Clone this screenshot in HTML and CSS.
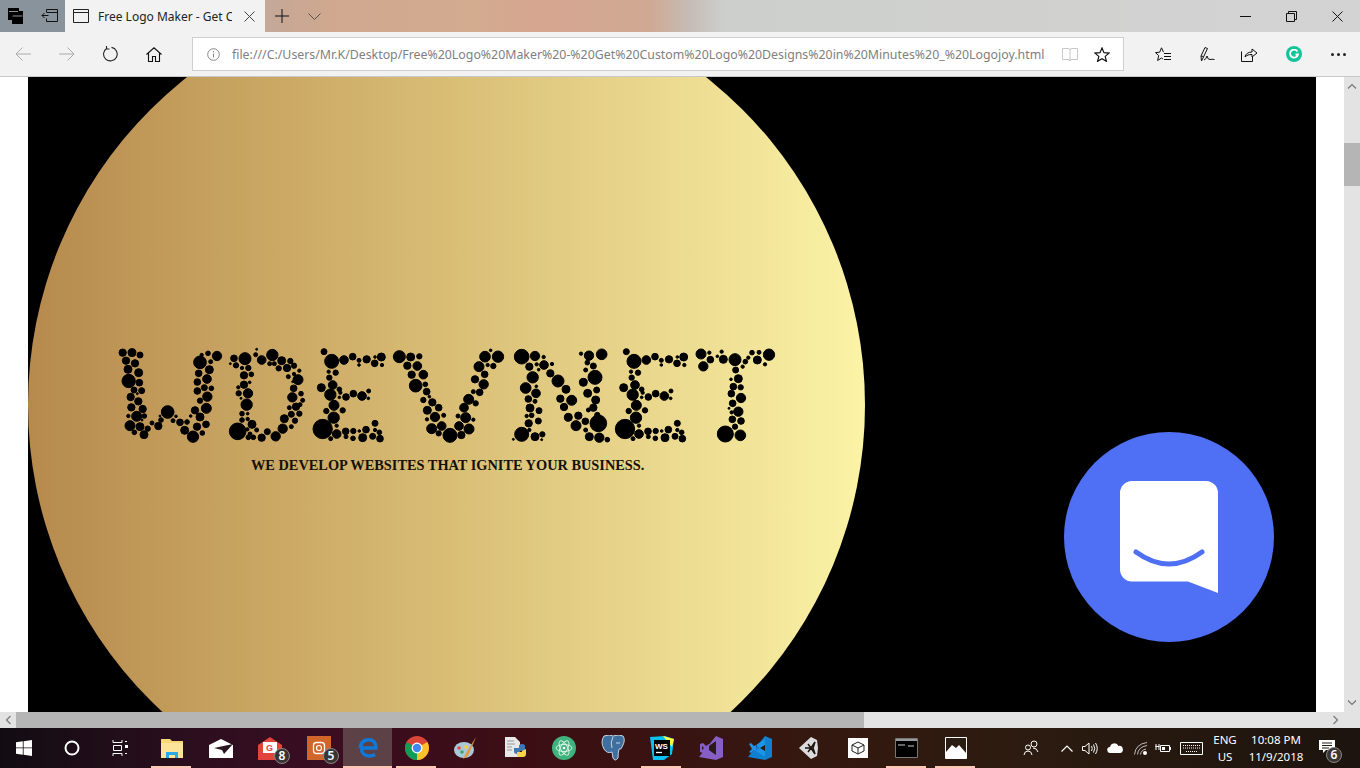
FILE: index.html
```html
<!DOCTYPE html>
<html>
<head>
    <meta charset="utf-8">
    <title>Free Logo Maker</title>
    <link rel="stylesheet" href="styles.css">
</head>
<body>
    <!-- Tab strip -->
    <div class="tabstrip">
        <div class="tab-tools">
            <svg width="16" height="16" viewBox="0 0 16 16"><path d="M0 0h11v3h4v13H4v-4H0z" fill="#000"/><path d="M1 3.500h9M4.500 8h10" stroke="#8a949c" fill="none"/></svg>
            <svg width="17" height="14" viewBox="0 0 17 14" fill="none" stroke="#111"><path d="M5.500 3.500V.5h11v12h-11v-3M6 3.500h10M7.500 6.500H1M3.500 4 1 6.500 3.500 9"/></svg>
        </div>
        <div class="tab">
            <svg width="16" height="14" viewBox="0 0 16 14" fill="none" stroke="#222"><path d="M.5.500h15v13H.5zM.5 3.500h15"/></svg>
            <span class="tab-title">Free Logo Maker - Get Custom Logo Designs</span>
            <svg width="11" height="11" viewBox="0 0 11 11" stroke="#444"><path d="M.5.500l10 10M10.500.500l-10 10"/></svg>
        </div>
        <div class="tab-new">
            <svg width="14" height="14" viewBox="0 0 14 14" stroke="#111"><path d="M7 0v14M0 7h14"/></svg>
            <svg class="tab-more" width="13" height="7" viewBox="0 0 13 7" fill="none" stroke="#555"><path d="M.5.500l6 6 6-6"/></svg>
        </div>
        <div class="win-btns">
            <div class="win-btn"><svg width="11" height="11" viewBox="0 0 11 11" stroke="#111"><path d="M0 5.500h11"/></svg></div>
            <div class="win-btn"><svg width="11" height="11" viewBox="0 0 11 11" fill="none" stroke="#111"><path d="M.5 2.500h8v8h-8zM2.500 2.500v-2h8v8h-2"/></svg></div>
            <div class="win-btn"><svg width="11" height="11" viewBox="0 0 11 11" stroke="#111"><path d="M.5.500l10 10M10.500.500l-10 10"/></svg></div>
        </div>
    </div>

    <!-- Address bar -->
    <div class="toolbar">
        <div class="nav-btns">
            <svg width="16" height="14" viewBox="0 0 16 14" fill="none" stroke="#aaa"><path d="M16 7H1M7.500.500 1 7l6.500 6.500"/></svg>
            <svg width="16" height="14" viewBox="0 0 16 14" fill="none" stroke="#aaa"><path d="M0 7h15M8.500.500 15 7l-6.500 6.500"/></svg>
            <svg class="nav-reload" width="16" height="16" viewBox="0 0 16 16" fill="none" stroke="#222" stroke-width="1.100"><path d="M5 2.200A6.800 6.800 0 1 0 9.500 1.400M4.500 0v3h3"/></svg>
            <svg width="16" height="15" viewBox="0 0 16 15" fill="none" stroke="#111" stroke-width="1.100"><path d="M.5 7.500 8 .8l7.500 6.700M2.500 6v8.500h4V9.500h3v5h4V6"/></svg>
        </div>
        <div class="address">
            <svg width="13" height="13" viewBox="0 0 13 13" fill="none" stroke="#888"><circle cx="6.500" cy="6.500" r="5.800"/><path d="M6.500 5.500v4M6.500 3v1.300"/></svg>
            <span class="url">file:///C:/Users/Mr.K/Desktop/Free%20Logo%20Maker%20-%20Get%20Custom%20Logo%20Designs%20in%20Minutes%20_%20Logojoy.html</span>
            <svg class="reader" width="16" height="15" viewBox="0 0 16 15" fill="none" stroke="#c8c8c8"><path d="M.5 1.500h5.500q2 0 2 1.500 0-1.500 2-1.500h5.500v11H10q-2 0-2 1.500 0-1.500-2-1.500H.5zM8 3v11"/></svg>
            <svg class="star" width="16" height="15" viewBox="0 0 16 15" fill="none" stroke="#111" stroke-width="1.200"><path d="M8 1l2 4.700 5 .4-3.800 3.300 1.200 4.900L8 11.700l-4.400 2.600 1.200-4.900L1 6.100l5-.4z"/></svg>
        </div>
        <div class="tool-btns">
            <svg width="16" height="15" viewBox="0 0 16 15" fill="none" stroke="#111"><path d="M8.500 5.200 6.500.8 4.700 5.200l-4.200.4 3.200 3-1.100 4.900L6.500 11 8 12M9 6.500h7M9 9.500h7M9 12.500h7"/></svg>
            <svg width="15" height="16" viewBox="0 0 15 16" fill="none" stroke="#111"><path d="M1.500 15 1 10 5 1.500l2.500 1-4 8.500zM1 10l2.500.5M4 14q2-.5 3-4 1 4 3 3.500t4.500 0"/></svg>
            <svg class="tool-share" width="16" height="15" viewBox="0 0 16 15" fill="none" stroke="#111"><path d="M.5 4.500v10h11V10M4 10c.5-3 3-5 7-5V2l5 4-5 4V7.500c-3 0-5 .5-7 2.500z"/></svg>
            <div class="g-badge"><svg width="10" height="10" viewBox="0 0 10 10" fill="none" stroke="#fff" stroke-width="1.800"><path d="M8.500 2.500A4 4 0 1 0 9 5.500H6.500"/></svg></div>
            <div class="dots"><i></i><i></i><i></i></div>
        </div>
    </div>

    <!-- Page -->
    <div class="viewport">
        <div class="page">
            <div class="hero">
                <div class="disc">
                    <svg class="logo" width="700" height="118" viewBox="0 0 2100 354" role="img" aria-label="WDEVINET logo">
                        <defs>
                            <g id="letter-e">
                                <circle cx="672" cy="50" r="9"/><circle cx="695" cy="79" r="21"/><circle cx="732" cy="75" r="13"/><circle cx="758" cy="65" r="10"/><circle cx="777" cy="76" r="6"/><circle cx="777" cy="90" r="4"/><circle cx="800" cy="73" r="11"/><circle cx="825" cy="66" r="4"/><circle cx="844" cy="66" r="12"/><circle cx="824" cy="85" r="10"/><circle cx="846" cy="90" r="5"/>
                                <circle cx="686" cy="110" r="5"/><circle cx="707" cy="113" r="8"/><circle cx="688" cy="128" r="8"/><circle cx="698" cy="150" r="13"/><circle cx="664" cy="158" r="12"/><circle cx="718" cy="163" r="7"/><circle cx="691" cy="179" r="17"/><circle cx="721" cy="173" r="5"/><circle cx="718" cy="187" r="4"/><circle cx="738" cy="186" r="10"/><circle cx="760" cy="176" r="10"/><circle cx="786" cy="183" r="13"/><circle cx="806" cy="168" r="6"/><circle cx="805" cy="190" r="4"/>
                                <circle cx="702" cy="211" r="15"/><circle cx="728" cy="226" r="8"/><circle cx="679" cy="228" r="8"/><circle cx="701" cy="248" r="17"/><circle cx="668" cy="282" r="29"/><circle cx="710" cy="272" r="5"/><circle cx="710" cy="297" r="13"/><circle cx="737" cy="289" r="10"/><circle cx="760" cy="288" r="8"/><circle cx="778" cy="288" r="4"/><circle cx="798" cy="284" r="10"/><circle cx="825" cy="265" r="9"/><circle cx="825" cy="285" r="5"/><circle cx="838" cy="292" r="7"/><circle cx="738" cy="305" r="6"/><circle cx="759" cy="310" r="7"/><circle cx="692" cy="311" r="6"/><circle cx="788" cy="308" r="12"/><circle cx="818" cy="304" r="9"/><circle cx="840" cy="311" r="10"/>
                            </g>
                        </defs>
                        <!-- W -->
                        <circle cx="68" cy="53" r="11"/><circle cx="96" cy="53" r="12"/><circle cx="120" cy="60" r="9"/><circle cx="78" cy="77" r="11"/><circle cx="105" cy="85" r="11"/><circle cx="84" cy="103" r="12"/><circle cx="116" cy="113" r="12"/><circle cx="86" cy="138" r="20"/><circle cx="118" cy="143" r="10"/><circle cx="102" cy="165" r="9"/><circle cx="125" cy="167" r="9"/><circle cx="92" cy="186" r="11"/><circle cx="112" cy="176" r="3"/><circle cx="115" cy="199" r="11"/><circle cx="94" cy="217" r="11"/><circle cx="128" cy="222" r="11"/><circle cx="85" cy="243" r="5"/><circle cx="110" cy="244" r="15"/><circle cx="133" cy="243" r="7"/><circle cx="126" cy="255" r="3"/><circle cx="90" cy="272" r="15"/><circle cx="120" cy="275" r="12"/><circle cx="143" cy="281" r="8"/><circle cx="103" cy="292" r="7"/><circle cx="132" cy="299" r="12"/>
                        <circle cx="156" cy="264" r="6"/><circle cx="175" cy="273" r="11"/><circle cx="183" cy="255" r="7"/><circle cx="180" cy="243" r="3"/><circle cx="203" cy="231" r="19"/><circle cx="228" cy="244" r="4"/><circle cx="219" cy="257" r="6"/><circle cx="240" cy="262" r="10"/><circle cx="261" cy="261" r="7"/><circle cx="254" cy="286" r="12"/><circle cx="272" cy="243" r="4"/><circle cx="279" cy="305" r="17"/><circle cx="291" cy="275" r="11"/><circle cx="307" cy="294" r="7"/><circle cx="318" cy="268" r="10"/><circle cx="300" cy="246" r="12"/><circle cx="285" cy="226" r="11"/><circle cx="319" cy="220" r="15"/><circle cx="300" cy="197" r="8"/><circle cx="322" cy="185" r="14"/><circle cx="292" cy="168" r="10"/><circle cx="313" cy="158" r="9"/><circle cx="334" cy="160" r="7"/><circle cx="292" cy="141" r="10"/><circle cx="321" cy="132" r="13"/><circle cx="296" cy="115" r="10"/><circle cx="300" cy="82" r="19"/><circle cx="328" cy="104" r="12"/><circle cx="351" cy="63" r="14"/><circle cx="324" cy="55" r="7"/><circle cx="305" cy="60" r="5"/><circle cx="332" cy="80" r="6"/>
                        <!-- D -->
                        <circle cx="402" cy="70" r="10"/><circle cx="435" cy="71" r="18"/><circle cx="467" cy="59" r="6"/><circle cx="470" cy="43" r="3"/><circle cx="485" cy="75" r="13"/><circle cx="517" cy="60" r="17"/><circle cx="545" cy="77" r="12"/><circle cx="571" cy="78" r="8"/><circle cx="391" cy="86" r="3"/><circle cx="408" cy="91" r="8"/><circle cx="426" cy="99" r="5"/><circle cx="445" cy="99" r="8"/><circle cx="509" cy="86" r="6"/><circle cx="523" cy="86" r="6"/><circle cx="536" cy="100" r="8"/><circle cx="561" cy="99" r="11"/><circle cx="582" cy="92" r="8"/><circle cx="598" cy="107" r="5"/><circle cx="432" cy="121" r="11"/><circle cx="454" cy="118" r="7"/><circle cx="565" cy="125" r="6"/><circle cx="582" cy="117" r="5"/><circle cx="594" cy="134" r="15"/><circle cx="578" cy="140" r="3"/><circle cx="432" cy="149" r="11"/><circle cx="415" cy="157" r="5"/><circle cx="449" cy="142" r="4"/><circle cx="581" cy="160" r="10"/><circle cx="603" cy="176" r="7"/><circle cx="416" cy="175" r="8"/><circle cx="444" cy="175" r="14"/><circle cx="423" cy="190" r="3"/><circle cx="577" cy="187" r="14"/><circle cx="608" cy="196" r="6"/><circle cx="600" cy="209" r="6"/><circle cx="440" cy="209" r="17"/><circle cx="588" cy="215" r="11"/><circle cx="568" cy="218" r="6"/><circle cx="426" cy="236" r="7"/><circle cx="443" cy="236" r="4"/><circle cx="598" cy="236" r="8"/><circle cx="574" cy="238" r="9"/><circle cx="426" cy="255" r="7"/><circle cx="443" cy="252" r="5"/><circle cx="553" cy="251" r="12"/><circle cx="585" cy="257" r="8"/><circle cx="456" cy="268" r="12"/><circle cx="574" cy="275" r="6"/><circle cx="413" cy="289" r="25"/><circle cx="442" cy="283" r="5"/><circle cx="470" cy="285" r="6"/><circle cx="450" cy="297" r="6"/><circle cx="502" cy="290" r="9"/><circle cx="548" cy="281" r="14"/><circle cx="445" cy="307" r="7"/><circle cx="460" cy="307" r="7"/><circle cx="485" cy="308" r="11"/><circle cx="527" cy="304" r="14"/>
                        <!-- E -->
                        <use href="#letter-e"/>
                        <!-- V -->
                        <circle cx="898" cy="65" r="18"/><circle cx="932" cy="66" r="12"/><circle cx="958" cy="64" r="8"/><circle cx="922" cy="92" r="11"/><circle cx="952" cy="93" r="13"/><circle cx="935" cy="119" r="11"/><circle cx="970" cy="119" r="13"/><circle cx="947" cy="152" r="19"/><circle cx="976" cy="148" r="7"/><circle cx="980" cy="170" r="10"/><circle cx="988" cy="185" r="4"/><circle cx="970" cy="195" r="8"/><circle cx="997" cy="202" r="11"/><circle cx="982" cy="226" r="12"/><circle cx="1016" cy="218" r="10"/><circle cx="1005" cy="246" r="14"/><circle cx="981" cy="253" r="5"/><circle cx="1031" cy="241" r="6"/><circle cx="1025" cy="273" r="13"/><circle cx="995" cy="281" r="15"/><circle cx="1016" cy="295" r="8"/>
                        <g transform="translate(1020 0)">
                            <circle cx="30" cy="301" r="21"/><circle cx="64" cy="300" r="11"/><circle cx="87" cy="282" r="15"/><circle cx="57" cy="273" r="13"/><circle cx="77" cy="248" r="15"/><circle cx="100" cy="254" r="5"/><circle cx="54" cy="243" r="6"/><circle cx="72" cy="218" r="13"/><circle cx="107" cy="205" r="8"/><circle cx="86" cy="193" r="15"/><circle cx="119" cy="172" r="10"/><circle cx="100" cy="170" r="6"/><circle cx="131" cy="148" r="14"/><circle cx="105" cy="133" r="11"/><circle cx="134" cy="118" r="10"/><circle cx="117" cy="95" r="15"/><circle cx="160" cy="93" r="8"/><circle cx="143" cy="90" r="5"/><circle cx="135" cy="65" r="16"/><circle cx="174" cy="65" r="17"/><circle cx="152" cy="46" r="4"/>
                            <!-- I and N -->
                            <circle cx="245" cy="65" r="22"/><circle cx="285" cy="63" r="14"/><circle cx="311" cy="66" r="5"/><circle cx="268" cy="95" r="11"/><circle cx="290" cy="88" r="5"/><circle cx="312" cy="90" r="13"/><circle cx="296" cy="104" r="4"/><circle cx="336" cy="87" r="5"/><circle cx="278" cy="127" r="17"/><circle cx="289" cy="154" r="4"/><circle cx="257" cy="159" r="16"/><circle cx="331" cy="115" r="11"/><circle cx="354" cy="138" r="18"/><circle cx="288" cy="175" r="13"/><circle cx="378" cy="163" r="12"/><circle cx="265" cy="192" r="10"/><circle cx="285" cy="199" r="6"/><circle cx="270" cy="219" r="12"/><circle cx="297" cy="227" r="9"/><circle cx="260" cy="243" r="5"/><circle cx="275" cy="241" r="7"/><circle cx="266" cy="265" r="11"/><circle cx="295" cy="258" r="9"/><circle cx="268" cy="285" r="5"/><circle cx="245" cy="298" r="21"/><circle cx="220" cy="313" r="3"/><circle cx="285" cy="305" r="12"/><circle cx="307" cy="298" r="8"/><circle cx="305" cy="314" r="3"/>
                            <circle cx="361" cy="191" r="11"/><circle cx="395" cy="196" r="15"/><circle cx="372" cy="216" r="11"/><circle cx="385" cy="247" r="12"/><circle cx="415" cy="242" r="11"/><circle cx="408" cy="272" r="15"/><circle cx="436" cy="259" r="10"/><circle cx="437" cy="285" r="6"/><circle cx="475" cy="265" r="25"/><circle cx="448" cy="305" r="12"/><circle cx="478" cy="308" r="14"/><circle cx="502" cy="314" r="7"/>
                            <circle cx="423" cy="56" r="5"/><circle cx="447" cy="62" r="14"/><circle cx="485" cy="58" r="16"/><circle cx="442" cy="83" r="7"/><circle cx="460" cy="93" r="9"/><circle cx="437" cy="105" r="6"/><circle cx="465" cy="127" r="21"/><circle cx="430" cy="142" r="12"/><circle cx="470" cy="165" r="9"/><circle cx="443" cy="175" r="12"/><circle cx="467" cy="195" r="12"/><circle cx="460" cy="218" r="11"/><circle cx="472" cy="240" r="8"/><circle cx="445" cy="225" r="6"/>
                            <!-- T -->
                            <circle cx="783" cy="57" r="15"/><circle cx="808" cy="53" r="5"/><circle cx="845" cy="50" r="5"/><circle cx="811" cy="74" r="10"/><circle cx="790" cy="94" r="14"/><circle cx="832" cy="64" r="4"/><circle cx="850" cy="73" r="12"/><circle cx="885" cy="74" r="18"/><circle cx="916" cy="80" r="7"/><circle cx="908" cy="95" r="5"/><circle cx="936" cy="53" r="7"/><circle cx="957" cy="52" r="6"/><circle cx="925" cy="68" r="5"/><circle cx="952" cy="75" r="12"/><circle cx="987" cy="59" r="17"/><circle cx="975" cy="88" r="5"/><circle cx="887" cy="105" r="9"/><circle cx="873" cy="133" r="4"/><circle cx="895" cy="131" r="12"/><circle cx="880" cy="155" r="10"/><circle cx="902" cy="157" r="8"/><circle cx="874" cy="176" r="10"/><circle cx="903" cy="189" r="14"/><circle cx="878" cy="205" r="10"/><circle cx="867" cy="220" r="3"/><circle cx="895" cy="230" r="14"/><circle cx="875" cy="232" r="5"/><circle cx="877" cy="253" r="10"/><circle cx="903" cy="258" r="10"/><circle cx="885" cy="275" r="8"/><circle cx="856" cy="297" r="24"/><circle cx="901" cy="301" r="16"/>
                        </g>
                        <use href="#letter-e" transform="translate(907 0)"/>
                    </svg>
                    <div class="tagline">WE DEVELOP WEBSITES THAT IGNITE YOUR BUSINESS.</div>
                </div>
                <div class="chat-btn">
                    <svg width="98" height="112" viewBox="0 0 98 112"><path d="M12 0H86a12 12 0 0 1 12 12V112L68 100.500H12a12 12 0 0 1-12-12V12A12 12 0 0 1 12 0z" fill="#fff"/><path d="M16 71Q49 95 82 71" fill="none" stroke="#4f70f5" stroke-width="5" stroke-linecap="round"/></svg>
                </div>
            </div>
        </div>
        <div class="vscroll">
            <svg width="10" height="6" viewBox="0 0 10 6" fill="none" stroke="#777" stroke-width="1.200"><path d="M1 5.500l4-4 4 4"/></svg>
            <div class="vthumb"></div>
            <svg width="10" height="6" viewBox="0 0 10 6" fill="none" stroke="#777" stroke-width="1.200"><path d="M1 .5l4 4 4-4"/></svg>
        </div>
    </div>
    <div class="hscroll">
        <div class="harrow"><svg width="6" height="10" viewBox="0 0 6 10" fill="none" stroke="#777" stroke-width="1.200"><path d="M5.500 1l-4 4 4 4"/></svg></div>
        <div class="hthumb"></div>
        <div class="harrow harrow-right"><svg width="6" height="10" viewBox="0 0 6 10" fill="none" stroke="#777" stroke-width="1.200"><path d="M.5 1l4 4-4 4"/></svg></div>
    </div>

    <!-- Taskbar -->
    <div class="taskbar">
        <div class="sys-btn"><svg width="16" height="16" viewBox="0 0 16 16" fill="#fff"><path d="M0 2.300 6.800 1.300V7.500H0zM7.600 1.200 16 0V7.500H7.600zM0 8.300H6.800V14.700L0 13.700zM7.600 8.300H16V16L7.600 14.800z"/></svg></div>
        <div class="sys-btn"><svg width="16" height="16" viewBox="0 0 16 16" fill="none" stroke="#fff" stroke-width="2"><circle cx="8" cy="8" r="6.500"/></svg></div>
        <div class="sys-btn"><svg width="16" height="16" viewBox="0 0 16 16" fill="none" stroke="#fff"><path d="M1 0v2.500h9V0M1.500 5.500h8v5h-8zM1 16v-2.500h9V16M13 1.500h2M13 13.500h2"/><path d="M13 5h3v3h-3z" fill="#fff" stroke="none"/></svg></div>

        <div class="app on"><svg width="22" height="20" viewBox="0 0 22 20"><path d="M0 1h9l2 2h11v17H0z" fill="#f8d775"/><path d="M0 5h22v15H0z" fill="#fbe39a"/><path d="M5 20v-6h12v6h-3v-3H8v3z" fill="#2aa7e8"/></svg></div>
        <div class="app"><svg width="24" height="19" viewBox="0 0 24 19"><path d="M0 6 12 0l12 6v13H0z" fill="#fff"/><path d="M5 9l19-4-9 10-2-4z" fill="#2b1522"/></svg></div>
        <div class="app"><svg width="24" height="23" viewBox="0 0 24 23"><path d="M12 0 24 8v15H0V8z" fill="#e0443a"/><path d="M5 5h14v11H5z" fill="#fff"/><text x="8" y="14" class="g-mark">G</text></svg><span class="badge">8</span></div>
        <div class="app"><svg width="24" height="24" viewBox="0 0 24 24" fill="none"><path d="M0 0h24v24H0z" fill="#d1662a"/><rect x="6.500" y="6.500" width="11" height="11" rx="3" stroke="#fff" stroke-width="1.300"/><circle cx="12" cy="12" r="2.500" stroke="#fff" stroke-width="1.200"/></svg><span class="badge">5</span></div>
        <div class="app active on"><svg width="20" height="20" viewBox="0 0 20 20" fill="none" stroke="#0f78d8" stroke-width="3.600"><path d="M2 9.800C3 4 7 1.800 11 1.800c4.500 0 7 3 6.800 8.200H3.500M3.500 10c0 5 3 8 7.500 8 2.300 0 4.500-.6 6-1.500"/></svg></div>
        <div class="app on"><svg width="24" height="24" viewBox="0 0 22 22"><circle cx="11" cy="11" r="11" fill="#db4437"/><path d="M11 11 20.500 5.500A11 11 0 0 1 11 22z" fill="#fbc02d"/><path d="M11 11 11 22A11 11 0 0 1 1.500 5.500z" fill="#0f9d58"/><circle cx="11" cy="11" r="5" fill="#fff"/><circle cx="11" cy="11" r="3.800" fill="#4285f4"/></svg></div>
        <div class="app"><svg width="24" height="24" viewBox="0 0 24 24"><ellipse cx="10" cy="14" rx="10" ry="8" fill="#a9c8d8"/><circle cx="5" cy="12" r="1.800" fill="#e44"/><circle cx="8" cy="16" r="1.800" fill="#3a6"/><circle cx="12" cy="11" r="1.800" fill="#fc3"/><path d="M22 1 12 17l-3 6 5-3z" fill="#e09a45"/></svg></div>
        <div class="app"><svg width="24" height="24" viewBox="0 0 24 24"><path d="M2 1h10l5 5v15H2z" fill="#e8e8e8"/><path d="M4 5h7M4 8h8M4 11h5M4 14h5" stroke="#999"/><path d="M11 12h5v-2q0-2 3-2t3 2v5h-5v3h-3q-3 0-3-3z" fill="#3d78b0"/><path d="M23 13v5q0 3-3 3h-3q-3 0-3-2v-3h5v-1z" fill="#f7d448"/></svg></div>
        <div class="app"><svg width="24" height="24" viewBox="0 0 24 24"><circle cx="12" cy="12" r="12" fill="#40b27d"/><g fill="none" stroke="#d6f3e3"><ellipse cx="12" cy="12" rx="8" ry="3.500"/><ellipse cx="12" cy="12" rx="8" ry="3.500" transform="rotate(60 12 12)"/><ellipse cx="12" cy="12" rx="8" ry="3.500" transform="rotate(120 12 12)"/></g><circle cx="12" cy="12" r="1.300" fill="#fff"/></svg></div>
        <div class="app"><svg width="24" height="26" viewBox="0 0 24 26"><path d="M3 1q6-2 9 0 6-2 10 0 3 4-1 11-1 3-3 2-1 4-1 9-3 4-5 0l-1-6q-5 2-8-3Q-1 7 3 1z" fill="#3f6f9e" stroke="#c8d4df"/><path d="M12 2q-3 5-1 11M15 8h4" fill="none" stroke="#c8d4df"/></svg></div>
        <div class="app on"><svg width="24" height="24" viewBox="0 0 24 24"><path d="M0 1 15 0l9 3-2 15-8 6H3z" fill="#07c3f2"/><path d="M13 0l11 3-2 8z" fill="#fcf84a"/><path d="M4 4h16v16H4z" fill="#000"/><text x="5" y="13" class="ws-mark">WS</text><path d="M6 16.500h6" stroke="#fff" stroke-width="1.300"/></svg></div>
        <div class="app"><svg width="24" height="24" viewBox="0 0 24 24"><path d="M17 0l7 3v18l-7 3-17-3z" fill="#865fc5"/><path d="M17 5v14L7 12z" fill="#2b1a18"/><path d="M1 8l3-1 3 3 0 4-3 3-3-1z" fill="#865fc5"/><path d="M3 10v4l2-2z" fill="#2b1a18"/><path d="M7 10l3-2 0 8-3-2z" fill="#865fc5"/></svg></div>
        <div class="app"><svg width="24" height="24" viewBox="0 0 24 24"><path d="M17 0l7 3v18l-7 3-17-3z" fill="#0f7fd0"/><path d="M17 6v12l-7-6z" fill="#2b1a12"/><path d="M1 8l2-1 3 3 2-1v6l-2-1-3 3-2-1 3-3z" fill="#1b95e6"/><path d="M8 9l9-6v6l-5 3 5 3v6l-9-6 3-3z" fill="#1b95e6"/></svg></div>
        <div class="app"><svg width="22" height="22" viewBox="0 0 22 22"><path d="M13 0l6 3 1 8-1 8-6 3-12-11z" fill="#dcdcdc"/><path d="M7 11h6l4-6-2 6 2 6-4-6M13 11l-3-4M13 11l-3 4" fill="none" stroke="#1d1410" stroke-width="1.500"/></svg></div>
        <div class="app"><svg width="20" height="20" viewBox="0 0 20 20"><path d="M0 0h20v20H0z" fill="#fff"/><path d="M10 4l6 3v6l-6 3-6-3V7zM10 10v6M10 10 4 7M10 10l6-3" fill="none" stroke="#222"/></svg></div>
        <div class="app on"><svg width="23" height="20" viewBox="0 0 23 20"><path d="M0 0h23v20H0z" fill="#000"/><path d="M.5.500h22v19H.5z" fill="none" stroke="#777"/><path d="M1 1h21v2H1z" fill="#999"/><path d="M3 7h7M13 8h6" stroke="#ccc"/></svg></div>
        <div class="app on"><svg width="22" height="22" viewBox="0 0 22 22"><path d="M.5.500h21v21H.5z" fill="#2a1d12" stroke="#fff"/><path d="M1 22v-7l6-7 4 3 3-3 7 8v6z" fill="#fff"/></svg></div>

        <div class="tray">
            <svg width="16" height="16" viewBox="0 0 16 16" fill="none" stroke="#fff"><circle cx="11" cy="4" r="3"/><circle cx="5" cy="7.500" r="2.500"/><path d="M1 15q.5-4 4-4t4 4M10 8q4 0 5 4"/></svg>
            <svg class="tray-caret" width="12" height="7" viewBox="0 0 12 7" fill="none" stroke="#fff" stroke-width="1.200"><path d="M.5 6.500 6 1l5.500 5.500"/></svg>
            <svg class="tray-sound" width="16" height="13" viewBox="0 0 16 13" fill="none" stroke="#fff"><path d="M.5 4.500h2.500l4-3.500v11l-4-3.500H.5zM9.500 4q1.500 2.500 0 5M11.500 2.500q2.500 4 0 8M13.500 1q3.500 5.500 0 11"/></svg>
            <svg class="tray-cloud" width="16" height="10" viewBox="0 0 16 10" fill="#fff"><path d="M3.500 10a3 3 0 0 1-.5-6 4.500 4.500 0 0 1 8.500-1 3.500 3.500 0 0 1 1.500 7z"/></svg>
            <svg class="tray-wifi" width="14" height="13" viewBox="0 0 14 13" fill="none" stroke="#bbb"><path d="M.5 12.500Q1.500 2 13 .5M3.500 12.500Q4 5 13 3.500M6.500 12.500Q7 8 12 7"/><circle cx="11" cy="11" r="2" fill="#fff" stroke="none"/></svg>
            <svg class="tray-battery" width="16" height="10" viewBox="0 0 16 10" fill="none" stroke="#fff"><path d="M5.500 2.500h9v6h-9zM15.500 4v3M1 1v6M4 1v6M.5 3.500h4"/><path d="M7 4h3v3H7z" fill="#fff" stroke="none"/></svg>
            <svg class="tray-keys" width="23" height="13" viewBox="0 0 23 13" fill="none" stroke="#fff"><path d="M.5.500h22v12H.5z"/><path d="M3 3.500h17M3 6h17M6 9.500h11" stroke-dasharray="1 1"/></svg>
            <div class="tray-lang">ENG<br>US</div>
            <div class="tray-clock">10:08 PM<br>11/9/2018</div>
            <div class="tray-note">
                <svg width="16" height="13" viewBox="0 0 16 13"><path d="M0 0h16v10H7l-3 3v-3H0z" fill="#fff"/><path d="M3 3h10M3 5.500h10M3 8h7" stroke="#2a1b12"/></svg>
                <span class="badge">6</span>
            </div>
        </div>
    </div>
</body>
</html>
```

FILE: styles.css
```css
html, body {
    margin: 0;
    padding: 0;
    height: 768px;
    overflow: hidden;
    font-family: "Noto Sans", "Open Sans", sans-serif;
}
body {
    display: flex;
    flex-direction: column;
}
svg {
    display: block;
    flex: none;
}

/* tab strip */
.tabstrip {
    display: flex;
    height: 32px;
    background: linear-gradient(to right, #c4a898 265px, #cfa88f 330px, #d3ab8f 480px, #d6a590 540px, #cfa993 650px, #c6bcb6 690px, #cdcfcc 725px, #d3d3d3 1360px);
}
.tab-tools {
    display: flex;
    align-items: center;
    width: 65px;
    padding-left: 8px;
    gap: 17px;
    box-sizing: border-box;
    background: #89939b;
}
.tab {
    display: flex;
    align-items: center;
    width: 200px;
    padding-left: 8px;
    box-sizing: border-box;
    background: #f2f2f2;
}
.tab-title {
    width: 134px;
    margin: 0 12px 0 9px;
    overflow: hidden;
    white-space: nowrap;
    font-size: 12px;
    color: #222;
}
.tab-new {
    display: flex;
    align-items: center;
    padding-left: 10px;
    gap: 19px;
}
.tab-more {
    margin-top: 1px;
}
.win-btns {
    display: flex;
    margin-left: auto;
}
.win-btn {
    display: flex;
    align-items: center;
    justify-content: center;
    width: 46px;
}

/* address bar */
.toolbar {
    display: flex;
    align-items: center;
    height: 45px;
    box-sizing: border-box;
    background: #f2f2f2;
    border-bottom: 1px solid #c8c8c8;
}
.nav-btns {
    display: flex;
    flex: none;
    align-items: center;
    width: 192px;
    padding-left: 15px;
    gap: 28px;
    box-sizing: border-box;
}
.nav-reload {
    margin-left: -1px;
}
.address {
    display: flex;
    flex: none;
    align-items: center;
    width: 932px;
    height: 34px;
    padding-left: 14px;
    box-sizing: border-box;
    background: #fff;
    border: 1px solid #cfcfcf;
}
.url {
    width: 814px;
    margin-left: 12px;
    overflow: hidden;
    white-space: nowrap;
    font-size: 12.35px;
    color: #808080;
}
.reader {
    margin-left: 16px;
}
.star {
    margin-left: 16px;
}
.tool-btns {
    display: flex;
    flex: none;
    align-items: center;
    padding-left: 31px;
    gap: 29px;
}
.tool-share {
    margin-left: -3px;
}
.g-badge {
    display: flex;
    align-items: center;
    justify-content: center;
    width: 16px;
    height: 16px;
    border-radius: 50%;
    background: #15c39a;
}
.dots {
    display: flex;
    gap: 3px;
}
.dots i {
    width: 3px;
    height: 3px;
    border-radius: 50%;
    background: #222;
}

/* page */
.viewport {
    display: flex;
    height: 635px;
}
.page {
    flex: 1;
    padding: 0 28px;
    background: #fff;
}
.hero {
    position: relative;
    height: 635px;
    overflow: hidden;
    background: #000;
}
.disc {
    display: flex;
    flex-direction: column;
    width: 837px;
    height: 836px;
    margin-top: -90px;
    padding-top: 348px;
    box-sizing: border-box;
    border-radius: 50%;
    background: linear-gradient(to right, #b68a4d, #d8bc74 49%, #fbf3a6);
}
.logo {
    margin-left: 72px;
    stroke: #000;
    stroke-width: 3;
}
.tagline {
    margin: 3px 0 0 223px;
    white-space: nowrap;
    font-family: "Liberation Serif", serif;
    font-weight: bold;
    font-size: 14.35px;
    line-height: 18px;
    color: #14110a;
}
.chat-btn {
    position: absolute;
    left: 1036px;
    top: 355px;
    display: flex;
    align-items: center;
    justify-content: center;
    width: 210px;
    height: 210px;
    border-radius: 50%;
    background: #4f70f5;
}
.vscroll {
    display: flex;
    flex-direction: column;
    align-items: center;
    width: 16px;
    padding: 6px 0;
    box-sizing: border-box;
    background: #e3e3e3;
}
.vthumb {
    width: 16px;
    height: 43px;
    margin: 54px 0 auto;
    background: #b5b5b5;
}
.hscroll {
    display: flex;
    height: 16px;
    background: #e3e3e3;
}
.harrow {
    display: flex;
    align-items: center;
    justify-content: center;
    width: 16px;
}
.harrow-right {
    margin-left: auto;
    margin-right: 16px;
}
.hthumb {
    width: 848px;
    background: #b5b5b5;
}

/* taskbar */
.taskbar {
    display: flex;
    height: 40px;
    color: #fff;
    background: linear-gradient(to right, #120c12, #2a0e1e 180px, #3a0d22 320px, #3c0e14 520px, #35180f 800px, #2c1b10 1020px, #1c140e 1360px);
}
.sys-btn {
    display: flex;
    align-items: center;
    justify-content: center;
    width: 48px;
}
.app {
    position: relative;
    display: flex;
    align-items: center;
    justify-content: center;
    width: 49px;
}
.app:nth-child(4) {
    margin-left: 3px;
}
.app.on::after {
    content: "";
    position: absolute;
    left: 4px;
    right: 5px;
    bottom: 0;
    height: 2px;
    background: #fcc8b4;
}
.app.active {
    background: #5c4246;
}
.app.active::after {
    left: 0;
    right: 0;
}
.g-mark {
    font: bold 9px "Liberation Sans", sans-serif;
    fill: #e0443a;
}
.ws-mark {
    font: bold 8px "Liberation Sans", sans-serif;
    fill: #fff;
}
.badge {
    position: absolute;
    right: 4px;
    bottom: 4px;
    width: 16px;
    height: 16px;
    box-sizing: border-box;
    border: 1px solid #8b8584;
    border-radius: 50%;
    background: #3a3535;
    font-size: 12px;
    font-weight: 600;
    line-height: 14px;
    text-align: center;
    color: #fff;
}
.tray {
    display: flex;
    align-items: center;
    flex: 1;
    padding-left: 43px;
    font-size: 11.5px;
    line-height: 17px;
}
.tray-caret {
    margin-left: 22px;
}
.tray-sound {
    margin-left: 9px;
}
.tray-cloud {
    margin-left: 9px;
}
.tray-wifi {
    margin-left: 11px;
}
.tray-battery {
    margin-left: 7px;
}
.tray-keys {
    margin-left: 9px;
}
.tray-lang {
    width: 28px;
    margin-left: 8px;
    text-align: center;
}
.tray-clock {
    width: 70px;
    margin-left: 2px;
    text-align: center;
}
.tray-note {
    position: relative;
    margin-left: 8px;
    margin-top: -4px;
}
.tray-note .badge {
    right: -7px;
    bottom: -10px;
}
```
